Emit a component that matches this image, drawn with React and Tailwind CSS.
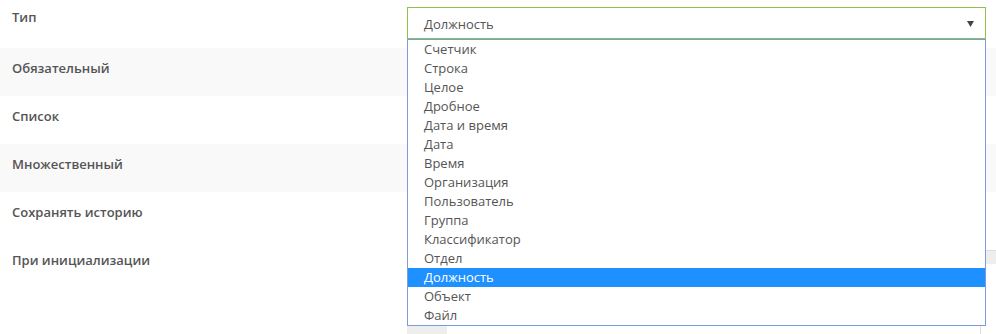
import { useState } from 'react';

const rows = [
  { label: 'Тип', gray: false },
  { label: 'Обязательный', gray: true },
  { label: 'Список', gray: false },
  { label: 'Множественный', gray: true },
  { label: 'Сохранять историю', gray: false },
  { label: 'При инициализации', gray: false },
];

const options = [
  'Счетчик',
  'Строка',
  'Целое',
  'Дробное',
  'Дата и время',
  'Дата',
  'Время',
  'Организация',
  'Пользователь',
  'Группа',
  'Классификатор',
  'Отдел',
  'Должность',
  'Объект',
  'Файл',
];

function TypeSelect() {
  const [value, setValue] = useState('Должность');

  return (
    <div className="relative w-[579px]">
      <div className="h-[32px] border border-[#8bc34a] bg-white flex items-center pt-[3px] pl-[16px] pr-[10px] text-[13px] text-[#555]">
        <span className="flex-1">{value}</span>
        <svg width="7" height="6" viewBox="0 0 7 6" className="mr-[1px] -mt-[1px]">
          <path d="M0 0h7L3.5 6z" fill="#444" />
        </svg>
      </div>
      {/* open list */}
      <ul className="absolute left-0 top-[32px] w-full border border-[#7b9bd9] bg-white z-10">
        {options.map((o) => (
          <li
            key={o}
            onClick={() => setValue(o)}
            className={`h-[19px] leading-[19px] pl-[16px] text-[13px] ${
              o === value ? 'bg-[#1e90ff] text-white' : 'text-[#555]'
            }`}
          >
            {o}
          </li>
        ))}
      </ul>
    </div>
  );
}

export default function App() {
  return (
    <div className="h-[334px] overflow-hidden bg-white font-['Open_Sans',sans-serif]">
      {rows.map((r, i) => (
        <div key={r.label} className={`flex h-[48px] ${r.gray ? 'bg-[#f9f9f9]' : 'bg-white'}`}>
          <div
            className={`w-[407px] pl-[12px] text-[13px] leading-[20px] font-semibold text-[#555] ${
              i === 0 ? 'pt-[7px]' : 'pt-[10px]'
            }`}
          >
            {r.label}
          </div>
          <div className="flex-1">
            {i === 0 && (
              <div className="pt-[7px]">
                <TypeSelect />
              </div>
            )}
            {i === 5 && (
              <div className="pt-[10px]">
                <div className="h-[14px] border-t border-[#ddd] bg-[#eee]" />
                <div className="h-[62px]" />
                <div className="flex h-[10px] w-[574px]">
                  <div className="w-[40px] bg-[#eee]" />
                  <div className="flex-1 border-r border-[#ddd]" />
                </div>
              </div>
            )}
          </div>
        </div>
      ))}
    </div>
  );
}
